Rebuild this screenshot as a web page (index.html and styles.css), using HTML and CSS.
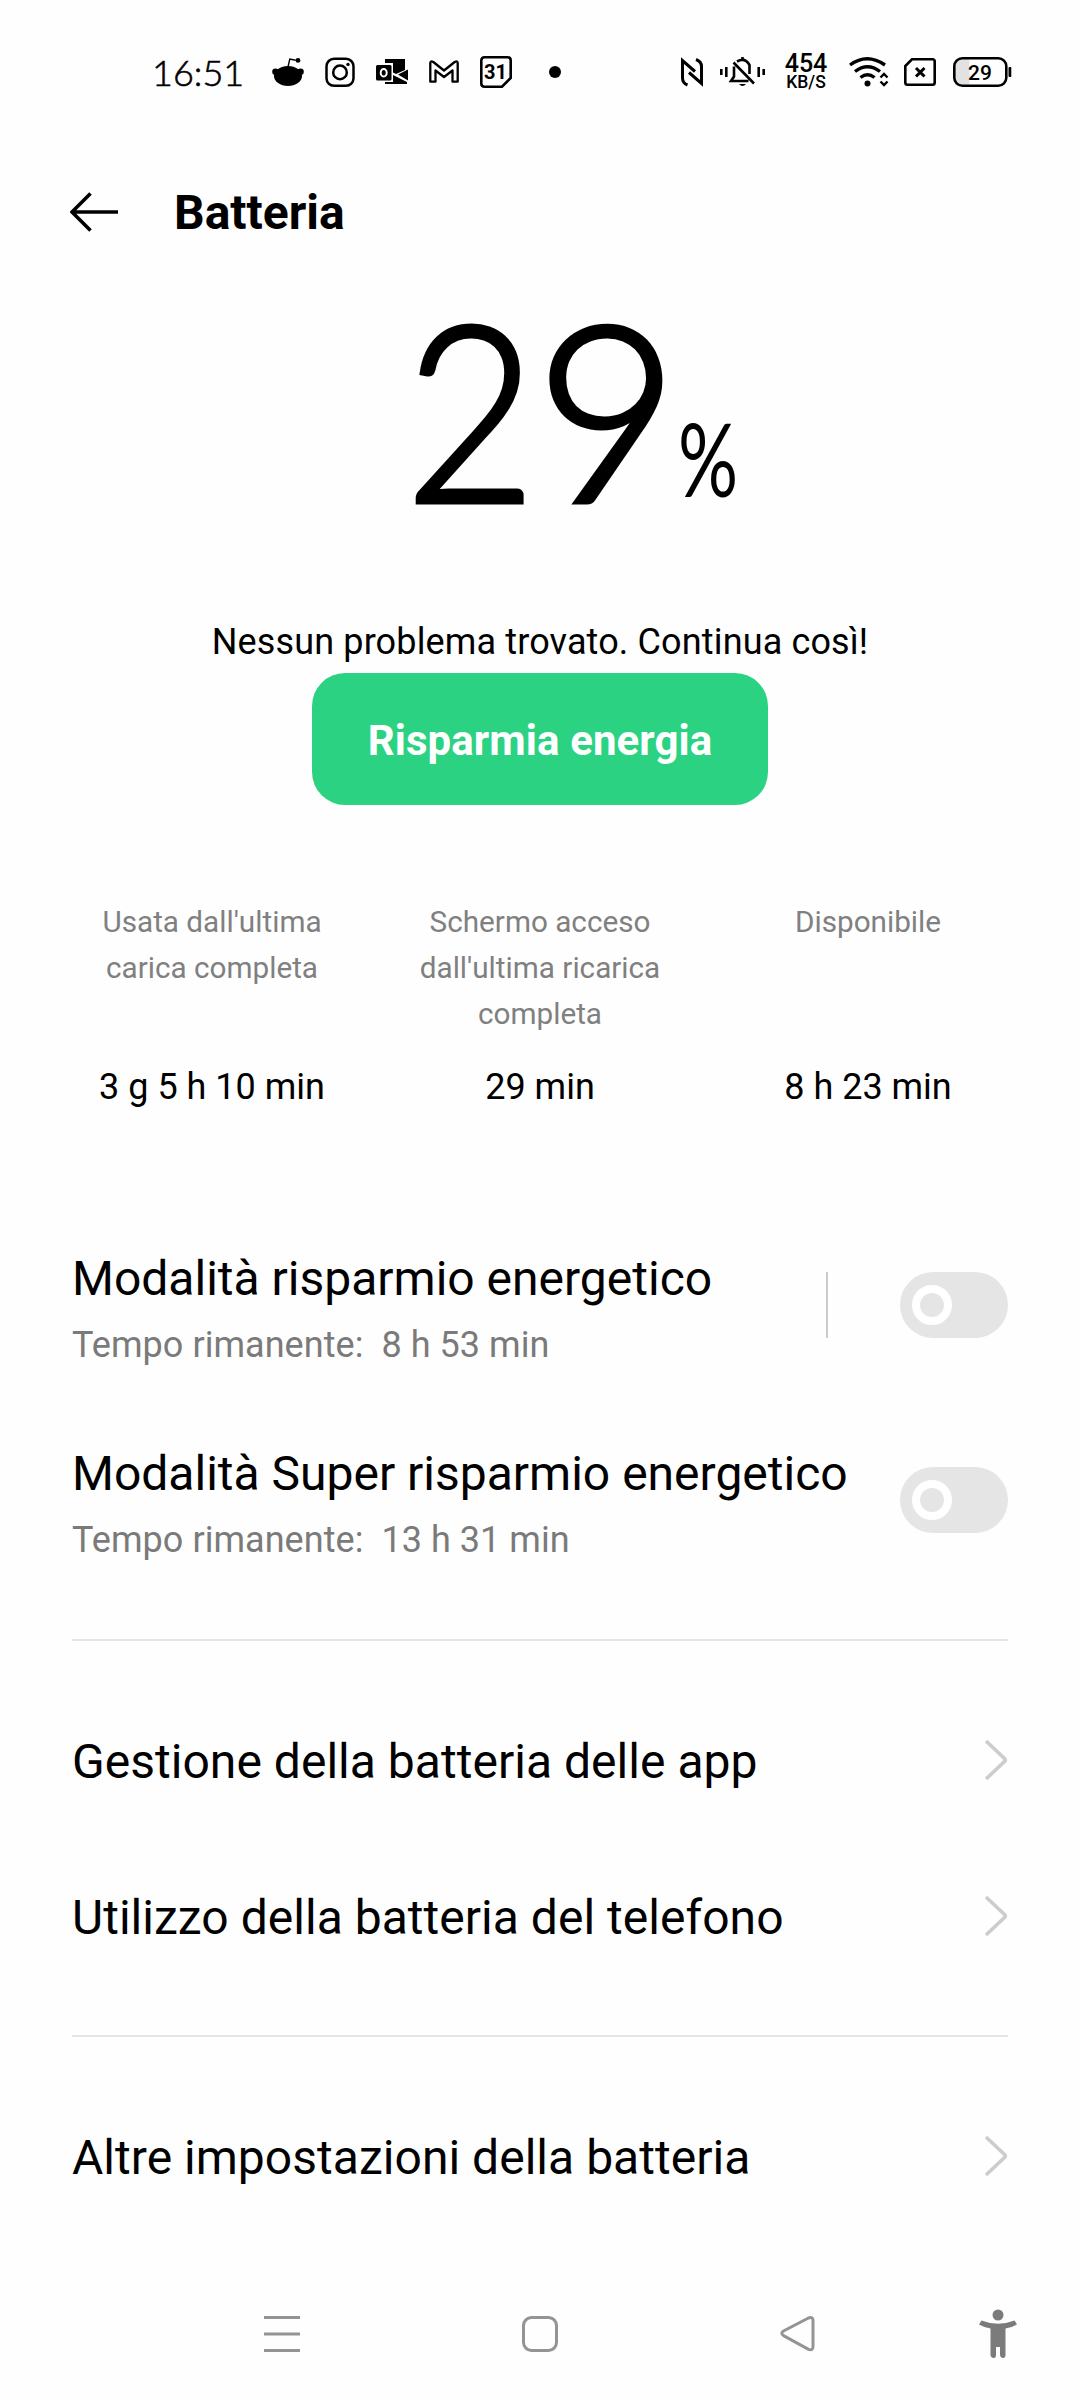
FILE: index.html
```html
<!DOCTYPE html>
<html lang="it">
<head>
<meta charset="utf-8">
<title>Batteria</title>
<link rel="stylesheet" href="styles.css">
</head>
<body>
<div class="screen">
  <div class="status">
    <span class="clock">16:51</span>
    <svg class="ic-reddit" width="32" height="32" viewBox="0 0 32 32"><ellipse cx="16" cy="20" rx="14" ry="10"/><circle cx="3.4" cy="15.8" r="3.2"/><circle cx="28.6" cy="15.8" r="3.2"/><path d="M16 11l1.8-8 6 1.3" fill="none" stroke="#000" stroke-width="1.4"/><circle cx="26" cy="4.4" r="2.4"/></svg>
    <svg class="ic-insta" width="30" height="32" viewBox="0 0 30 32" fill="none" stroke="#000" stroke-width="2.5"><rect x="1.5" y="2.8" width="27" height="27" rx="7.5"/><circle cx="15" cy="16.4" r="6.8"/><circle cx="23" cy="8.4" r="1.7" fill="#000" stroke="none"/></svg>
    <svg class="ic-outlook" width="33" height="32" viewBox="0 0 33 32"><path d="M9 3h20v11l-9 4-3-1.500V7H9zM22 18.500l10-5v11zM9 26h8v-7l14 7v2H9z"/><rect x="0" y="9" width="15.500" height="15.500" rx="1.5"/><ellipse cx="7.700" cy="16.700" rx="3" ry="3.800" fill="none" stroke="#fff" stroke-width="2"/></svg>
    <svg class="ic-gmail" width="30" height="32" viewBox="0 0 30 32" fill="none" stroke="#000" stroke-width="2.3" stroke-linejoin="round"><path d="M1.300 25.700V7q0-2.500 3-1L15 14.500 25.700 6q3-1.500 3 1v18.700h-5.200V14.500L15 21l-8.500-6.500v11.200z"/></svg>
    <svg class="ic-cal" width="32" height="32" viewBox="0 0 32 32"><path d="M4.500 1.300h23q3.200 0 3.200 3.200v17.500l-8.700 8.700H4.500q-3.200 0-3.200-3.200v-23q0-3.200 3.200-3.200z" fill="none" stroke="#000" stroke-width="2.6"/><text x="15.500" y="23" class="cal-text">31</text></svg>
    <span class="dot"></span>
    <svg class="ic-nfc" width="22" height="32" viewBox="0 0 22 32" fill="none" stroke="#000" stroke-width="3"><path d="M6.500 29Q1.500 27 1.500 22V4.500L14 15.500M15 3.500q5.500 2 5.500 7V27.500L8 16.500"/></svg>
    <svg class="ic-bell" width="45" height="32" viewBox="0 0 45 32" fill="none" stroke="#000" stroke-width="2.6"><path d="M1.300 13v6M6.300 11v10M38.700 11v10M43.700 13v6"/><path d="M13.500 6.500L34 27.500M17 5.500q8-4.500 12.500 3.500V18M14 10.500v10l-3 4.500h17.500"/><path d="M19 28h7q-3.500 4-7 0z" fill="#000" stroke="none"/><path d="M22.500 1v3"/></svg>
    <span class="net"><span class="net-n">454</span><span class="net-u">KB/S</span></span>
    <svg class="ic-wifi" width="41" height="32" viewBox="0 0 41 32" fill="none" stroke="#000" stroke-width="3.4"><path d="M1 9q17-12.500 35 0M6 15.500q12.500-9.500 25 0M11.500 21.500q7-5.500 14 0"/><circle cx="18.500" cy="27.500" r="3" fill="#000" stroke="none"/><path d="M31.500 21.500l3.500-3.500 3.500 3.500M31.500 25.500l3.500 3.500 3.500-3.500" stroke-width="2.4"/></svg>
    <svg class="ic-sim" width="32" height="32" viewBox="0 0 32 32" fill="none" stroke="#000" stroke-width="2.600"><path d="M8 3.300h20.500q2.200 0 2.200 2.200v21q0 2.200-2.200 2.200h-25q-2.200 0-2.200-2.200V10z"/><path d="M12 12l8.500 8.500M20.500 12L12 20.500" stroke-width="3"/></svg>
    <svg class="ic-batt" width="59" height="32" viewBox="0 0 59 32"><path d="M9 3h7.500v26H9q-7 0-7-7V9q0-6 7-6z" fill="#e2e2e2"/><rect x="1.300" y="2.300" width="52" height="27.400" rx="8" fill="none" stroke="#000" stroke-width="2.600"/><rect x="55.500" y="11" width="2.800" height="10" rx="1"/><text x="27" y="23.500" class="batt-text">29</text></svg>
  </div>

  <header class="topbar">
    <svg width="48" height="40" viewBox="0 0 48 40" fill="none" stroke="#000" stroke-width="3.600"><path d="M48 20H3M20.500 1.500L2 20l18.500 18.500"/></svg>
    <h1>Batteria</h1>
  </header>

  <section class="hero">
    <div class="level"><span class="level-n"><span class="digit-a">2</span><span class="digit-b">9</span></span><span class="level-u">%</span></div>
    <p class="message">Nessun problema trovato. Continua così!</p>
    <button class="save">Risparmia energia</button>
  </section>

  <section class="stats">
    <div class="stat"><div class="label">Usata dall'ultima<br>carica completa</div><div class="value">3 g 5 h 10 min</div></div>
    <div class="stat"><div class="label">Schermo acceso<br>dall'ultima ricarica<br>completa</div><div class="value">29 min</div></div>
    <div class="stat"><div class="label">Disponibile</div><div class="value">8 h 23 min</div></div>
  </section>

  <section class="modes">
    <div class="mode">
      <div class="mode-text"><div class="mode-title">Modalità risparmio energetico</div><div class="mode-sub">Tempo rimanente:&nbsp; 8 h 53 min</div></div>
      <span class="bar"></span>
      <span class="toggle"><span class="knob"></span></span>
    </div>
    <div class="mode">
      <div class="mode-text"><div class="mode-title">Modalità Super risparmio energetico</div><div class="mode-sub">Tempo rimanente:&nbsp; 13 h 31 min</div></div>
      <span class="toggle"><span class="knob"></span></span>
    </div>
  </section>

  <nav class="links">
    <a class="link"><span>Gestione della batteria delle app</span><svg class="chev" width="24" height="42" viewBox="0 0 24 42"><path d="M2 2l18.500 17.500q1.500 1.500 0 3L2 40"/></svg></a>
    <a class="link"><span>Utilizzo della batteria del telefono</span><svg class="chev" width="24" height="42" viewBox="0 0 24 42"><path d="M2 2l18.500 17.500q1.500 1.500 0 3L2 40"/></svg></a>
  </nav>
  <nav class="links">
    <a class="link"><span>Altre impostazioni della batteria</span><svg class="chev" width="24" height="42" viewBox="0 0 24 42"><path d="M2 2l18.500 17.500q1.500 1.500 0 3L2 40"/></svg></a>
  </nav>

  <footer class="sysnav">
    <svg class="nav-menu" width="36" height="36" viewBox="0 0 36 36" fill="none" stroke="#949494" stroke-width="3"><path d="M0 1.500h36M0 18h36M0 34.500h36"/></svg>
    <svg class="nav-home" width="36" height="36" viewBox="0 0 36 36" fill="none" stroke="#949494" stroke-width="3"><rect x="1.500" y="1.500" width="33" height="33" rx="8"/></svg>
    <svg class="nav-back" width="36" height="36" viewBox="0 0 36 36" fill="none" stroke="#949494" stroke-width="3"><path d="M28.500 2L3.500 15q-3.500 2.300 0 4.600L28.500 33.300q4.500 1.500 4.500-2.500V4.500q0-4-4.500-2.500z"/></svg>
    <svg class="nav-access" width="38" height="50" viewBox="0 0 38 50" fill="#7b7b7b"><circle cx="19" cy="6" r="5.500"/><path d="M2.500 11.500Q19 18 35.500 11.500L38 15.500Q33 18.500 26.500 19.500V46q0 3-2.500 3T21 46V38H17v8q0 3-2.500 3T11.500 46V19.500Q5 18.500 0 15.500z"/></svg>
  </footer>
</div>
</body>
</html>
```
FILE: styles.css
```css
* { box-sizing: border-box; margin: 0; padding: 0; }
body { background: #fefefe; color: #000; font-family: Roboto, sans-serif; }
.screen { width: 1080px; height: 2400px; overflow: hidden; display: flex; flex-direction: column; }
.screen > * { flex: none; }
svg { display: block; flex: none; }

.status { height: 144px; display: flex; align-items: center; padding-left: 152px; }
.clock { width: 120px; font: 300 36px/40px Lato, sans-serif; letter-spacing: 0; -webkit-text-stroke: 0.6px #000; }
.ic-insta { margin-left: 21px; }
.ic-outlook { margin-left: 21px; }
.ic-gmail { margin-left: 20px; }
.ic-cal { margin-left: 21px; }
.cal-text { font: 700 20px Roboto, sans-serif; text-anchor: middle; }
.dot { width: 12px; height: 12px; border-radius: 50%; background: #000; margin-left: 37px; }
.ic-nfc { margin-left: 120px; }
.ic-bell { margin-left: 17px; }
.net { width: 44px; margin-left: 19px; display: flex; flex-direction: column; align-items: center; font-weight: 500; }
.net-n { font-size: 25px; line-height: 19px; }
.net-u { font-size: 17.5px; line-height: 18px; }
.ic-wifi { margin-left: 21px; }
.ic-sim { margin-left: 14px; }
.ic-batt { margin-left: 17px; }
.batt-text { font: 500 21px Roboto, sans-serif; text-anchor: middle; }

.topbar { height: 136px; display: flex; align-items: center; gap: 56px; padding-left: 70px; }
h1 { padding-top: 2px; font-size: 48px; line-height: 56px; font-weight: 700; }

.hero { display: flex; flex-direction: column; align-items: center; }
.level { height: 341px; width: 100%; display: flex; align-items: baseline; padding-left: 406px; font-family: Lato, sans-serif; }
.level-n { width: 272px; display: flex; font-size: 246px; line-height: 254px; font-weight: 300; letter-spacing: -9px; -webkit-text-stroke: 5px #000; }
.digit-a { transform: translateX(-1px) scaleX(0.92); transform-origin: left; }
.digit-b { transform: translateX(-4px); }
.level-u { font-size: 100px; line-height: 100px; transform: translateY(-5px) scaleX(0.75); transform-origin: left; }
.message { font-size: 36px; line-height: 42px; letter-spacing: 0.14px; }
.save { width: 456px; height: 132px; margin-top: 10px; padding-top: 3px; border: 0; border-radius: 33px; background: #2bd282; color: #fff; font: 700 42px/50px Roboto, sans-serif; letter-spacing: 0.1px; }

.stats { margin-top: 94px; padding: 0 48px; height: 309px; display: grid; grid-template-columns: repeat(3, 1fr); text-align: center; }
.label { height: 138px; font-size: 29.7px; line-height: 46px; color: #808080; }
.value { margin-top: 28px; font-size: 36px; line-height: 44px; }

.modes { margin: 0 72px; height: 433px; border-bottom: 2px solid #e5e5e5; }
.mode { height: 195px; display: flex; align-items: center; }
.mode-text { flex: 1; }
.mode-title { font-size: 48px; line-height: 60px; white-space: nowrap; }
.mode-sub { margin-top: 18px; font-size: 36px; line-height: 36px; color: #7a7a7a; letter-spacing: 0.05px; }
.bar { width: 2px; height: 66px; background: #ccc; margin: 0 72px 1px 0; }
.toggle { width: 108px; height: 66px; margin-bottom: 1px; border-radius: 33px; background: #e5e5e5; display: flex; align-items: center; padding-left: 12px; flex: none; }
.knob { width: 40px; height: 40px; border-radius: 50%; border: 8px solid #fff; }

.links { margin: 0 72px; padding: 41px 0; }
.links:nth-of-type(1) { border-bottom: 2px solid #e5e5e5; }
.links:nth-of-type(2) { padding-bottom: 0; }
.link { height: 156px; display: flex; align-items: center; justify-content: space-between; font-size: 48px; line-height: 56px; letter-spacing: 0.03px; }
.link span { padding-top: 3px; }
.chev { fill: none; stroke: #ccc; stroke-width: 3.6; }

.sysnav { margin-top: auto; height: 132px; display: flex; align-items: center; padding-left: 264px; }
.nav-home { margin-left: 222px; }
.nav-back { margin-left: 222px; }
.nav-access { margin-left: 163px; }
```
